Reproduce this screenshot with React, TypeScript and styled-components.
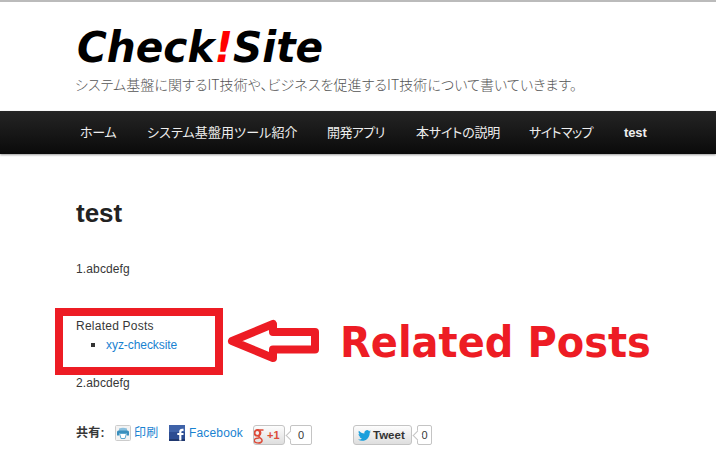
import React from "react";
import styled, { createGlobalStyle } from "styled-components";

const Global = createGlobalStyle`
  body { margin: 0; background: #fff; overflow: hidden; }
  * { box-sizing: border-box; }
`;

const Page = styled.div`
  position: relative;
  width: 716px;
  height: 460px;
  border-top: 2px solid #bbb;
  overflow: hidden;
  color: #373737;
  font: 12px/20px "Liberation Sans", "Noto Sans CJK JP", sans-serif;
  white-space: nowrap;
`;

const Header = styled.header`
  height: 109px;
  padding: 20px 0 0 76px;
`;

const Logo = styled.h1`
  margin: 0 0 0 1px;
  width: max-content;
  height: 50px;
  font: italic bold 43px/50px "DejaVu Sans", sans-serif;
  color: #000;
  transform-origin: 0 0;
  transform: scaleX(0.945);
`;

const Bang = styled.span`
  color: #f00;
`;

const Tagline = styled.p`
  margin: 2px 0 0 -1px;
  font: 300 14px/20px "Noto Sans CJK JP", sans-serif;
  font-feature-settings: "palt";
  letter-spacing: 0.08px;
  color: #555;
`;

const Nav = styled.nav`
  display: flex;
  height: 43px;
  padding-left: 80px;
  background: linear-gradient(#252525, #0a0a0a);
  box-shadow: 0 1px 2px rgba(0, 0, 0, 0.4);
`;

const NavItem = styled.a<{ $w: number; $ls?: number; $bold?: boolean }>`
  width: ${(p) => p.$w}px;
  flex: none;
  color: #eee;
  font: ${(p) => (p.$bold ? "bold" : "normal")} 13px/43px "Liberation Sans", "Noto Sans CJK JP", sans-serif;
  font-feature-settings: "palt";
  letter-spacing: ${(p) => p.$ls ?? 0}px;
`;

const Article = styled.article`
  padding: 42px 0 0 76px;
`;

const Title = styled.h2`
  margin: 0;
  font: bold 26px/34px "Liberation Sans", sans-serif;
  color: #222;
`;

const Line = styled.p<{ $top: number; $ls?: number }>`
  margin: ${(p) => p.$top}px 0 0;
  height: 20px;
  letter-spacing: ${(p) => p.$ls ?? 0.13}px;
`;

const Related = styled.ul`
  margin: 0;
  padding: 0;
  list-style: none;
`;

const RelatedItem = styled.li`
  display: flex;
  align-items: center;
  height: 18px;
  padding-left: 15px;
  gap: 11px;
  color: #1982d1;
  letter-spacing: -0.06px;
  &::before {
    content: "";
    width: 4px;
    height: 4px;
    background: #333;
  }
`;

const Share = styled.div`
  display: flex;
  align-items: flex-start;
  height: 24px;
  margin-top: 30px;
`;

const ShareLabel = styled.b<{ $w: number }>`
  width: ${(p) => p.$w}px;
  letter-spacing: 0.3px;
`;

const ShareLink = styled.a<{ $w: number; $gap?: number }>`
  display: flex;
  align-items: center;
  gap: ${(p) => p.$gap ?? 4}px;
  flex: none;
  width: ${(p) => p.$w}px;
  height: 20px;
  color: #1982d1;
  letter-spacing: 0.16px;
`;

const Button = styled.button<{ $w: number; $c: string; $size: number; $gap: number; $pad: number }>`
  display: flex;
  align-items: center;
  gap: ${(p) => p.$gap}px;
  flex: none;
  width: ${(p) => p.$w}px;
  height: 20px;
  margin-top: 2px;
  padding: 0 0 0 ${(p) => p.$pad}px;
  overflow: hidden;
  border: 1px solid #c4c4c4;
  border-radius: 3px;
  background: linear-gradient(#fdfdfd, #dedede);
  color: ${(p) => p.$c};
  font: bold ${(p) => p.$size}px/18px "Liberation Sans", sans-serif;
  svg { flex: none; }
`;

const Count = styled.span<{ $w: number; $gap: number }>`
  position: relative;
  flex: none;
  width: ${(p) => p.$w}px;
  height: 20px;
  margin: 2px ${(p) => p.$gap}px 0 5px;
  border: 1px solid #c4c4c4;
  border-radius: 2px;
  background: #fff;
  text-align: center;
  line-height: 19px;
  font-size: 11px;
  &::before {
    content: "";
    position: absolute;
    left: -4px;
    top: 6px;
    width: 6px;
    height: 6px;
    border: solid #c4c4c4;
    border-width: 0 0 1px 1px;
    background: #fff;
    transform: rotate(45deg);
  }
`;

const Frame = styled.div`
  position: absolute;
  left: 55px;
  top: 306px;
  width: 168px;
  height: 67px;
  border: 8px solid #ed1c24;
`;

const Arrow = styled.svg`
  position: absolute;
  left: 224px;
  top: 314px;
`;

const Callout = styled.div`
  position: absolute;
  left: 340px;
  top: 315px;
  color: #ed1c24;
  font: bold 43px/50px "DejaVu Sans", sans-serif;
  transform-origin: 0 0;
  transform: scaleX(0.93);
`;

const PrintIcon = () => (
  <svg width="16" height="16" viewBox="0 0 16 16">
    <rect x=".5" y=".5" width="15" height="15" rx="1" fill="#f3f3f3" stroke="#ccc" />
    <path d="M4 3.500Q8 2 12 3.500V6H4z" fill="#8cc0de" />
    <path d="M3.500 5.500h9q1.500 0 1.500 1.500v3.500h-2L11.500 8h-7L4 10.500H2V7q0-1.500 1.500-1.500z" fill="#3a8fbd" />
    <path d="M4.500 8.500h7l-1.500 5H6z" fill="#fff" stroke="#5aa7cf" />
  </svg>
);

const FacebookIcon = () => (
  <svg width="16" height="16" viewBox="0 0 16 16">
    <rect width="16" height="16" rx="1" fill="#2c4c92" />
    <path d="M0 0h16v7H0z" fill="#3f62a8" />
    <path d="M0 14h16v2H0z" fill="#20386f" />
    <path d="M14.500 4.800h-1.200c-1.500 0-2 .9-2 2.200v8.500M8.300 9H14.500" fill="none" stroke="#fff" strokeWidth="2.200" />
  </svg>
);

const GoogleIcon = () => (
  <svg width="11" height="18" viewBox="0 0 11 18">
    <g fill="none" stroke="#dd4b39">
      <ellipse cx="3.300" cy="6.900" rx="2.700" ry="2.900" strokeWidth="1.800" />
      <path d="M3 3.900h6.500M6 5c1.200 2 .6 3.500-.7 4.500-1 .9-.4 1.500.8 2.300 3 1.700 2.500 5-1.500 5.200-3 0-4.400-1-4.400-2.500s2-2.500 5-2.400" strokeWidth="1.500" />
    </g>
  </svg>
);

const BirdIcon = () => (
  <svg width="13" height="11" viewBox="0 0 24 20">
    <path
      fill="#1b9fdc"
      d="M24 2.400c-.9.400-1.800.7-2.800.8 1-.6 1.800-1.600 2.200-2.700-1 .6-2 1-3.100 1.200A4.900 4.900 0 0 0 11.900 6.200C7.700 6 4.100 4 1.700 1 .4 3.200 1 6.100 3.200 7.600c-.8 0-1.600-.2-2.200-.6 0 2.300 1.600 4.400 3.900 4.900-.7.200-1.500.2-2.200.1.600 2 2.400 3.400 4.600 3.400A9.900 9.900 0 0 1 0 17.500 14 14 0 0 0 7.500 19.700c9.100 0 14.300-7.700 14-14.600 1-.7 1.800-1.600 2.500-2.700z"
    />
  </svg>
);

export default function App() {
  return (
    <Page>
      <Global />
      <Header>
        <Logo>
          Check<Bang>!</Bang>Site
        </Logo>
        <Tagline>システム基盤に関するIT技術や、ビジネスを促進するIT技術について書いていきます。</Tagline>
      </Header>
      <Nav>
        <NavItem $w={67} $ls={-0.3}>ホーム</NavItem>
        <NavItem $w={180} $ls={0.12}>システム基盤用ツール紹介</NavItem>
        <NavItem $w={89} $ls={-0.6}>開発アプリ</NavItem>
        <NavItem $w={113} $ls={-0.15}>本サイトの説明</NavItem>
        <NavItem $w={95} $ls={-0.6}>サイトマップ</NavItem>
        <NavItem $w={40} $ls={-0.1} $bold>test</NavItem>
      </Nav>
      <Article>
        <Title>test</Title>
        <Line $top={29}>1.abcdefg</Line>
        <Line $top={37} $ls={0.24}>Related Posts</Line>
        <Related>
          <RelatedItem>xyz-checksite</RelatedItem>
        </Related>
        <Line $top={19}>2.abcdefg</Line>
        <Share>
          <ShareLabel $w={39}>共有:</ShareLabel>
          <ShareLink $w={54} $gap={3}>
            <PrintIcon />
            印刷
          </ShareLink>
          <ShareLink $w={84}>
            <FacebookIcon />
            Facebook
          </ShareLink>
          <Button $w={32} $c="#dd4b39" $size={11} $gap={2} $pad={0}>
            <GoogleIcon />
            +1
          </Button>
          <Count $w={22} $gap={41}>0</Count>
          <Button $w={59} $c="#333" $size={11.5} $gap={2} $pad={4}>
            <BirdIcon />
            Tweet
          </Button>
          <Count $w={15} $gap={0}>0</Count>
        </Share>
      </Article>
      <Frame />
      <Arrow width="100" height="52" viewBox="224 316 100 52">
        <path
          d="M232 341L273 324V332H315V349.500H273V358Z"
          fill="#fff"
          stroke="#ed1c24"
          strokeWidth="8"
          strokeLinejoin="round"
        />
      </Arrow>
      <Callout>Related Posts</Callout>
    </Page>
  );
}
